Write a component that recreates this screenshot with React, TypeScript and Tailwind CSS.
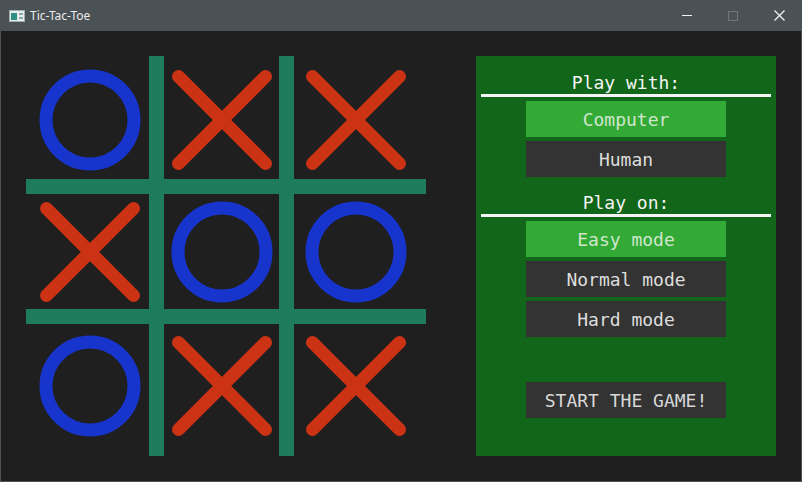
import React from "react";

type Mark = "X" | "O";

const board: Mark[][] = [
  ["O", "X", "X"],
  ["X", "O", "O"],
  ["O", "X", "X"],
];

const colPad = ["pl-[5px]", "", "pr-[8px]"];
const rowPad = ["pt-[5px]", "", "pb-[8px]"];
const colStart = ["col-start-1", "col-start-3", "col-start-5"];
const rowStart = ["row-start-1", "row-start-3", "row-start-5"];

function MarkIcon({ mark }: { mark: Mark }) {
  if (mark === "O") {
    return (
      <svg width="102" height="102" viewBox="0 0 102 102">
        <circle cx="51" cy="51" r="44" fill="none" stroke="#1734cc" strokeWidth="13" />
      </svg>
    );
  }
  return (
    <svg width="100" height="100" viewBox="0 0 100 100">
      <g stroke="#cc3315" strokeWidth="13" strokeLinecap="round">
        <line x1="6.5" y1="6.5" x2="93.5" y2="93.5" />
        <line x1="93.5" y1="6.5" x2="6.5" y2="93.5" />
      </g>
    </svg>
  );
}

function Board() {
  return (
    <div className="grid grid-cols-[123px_15px_115px_15px_132px] grid-rows-[123px_15px_115px_15px_132px] w-[400px] h-[400px] shrink-0">
      {/* grid lines */}
      <div className="col-start-2 row-start-1 row-span-5 bg-[#1e7b5b]" />
      <div className="col-start-4 row-start-1 row-span-5 bg-[#1e7b5b]" />
      <div className="row-start-2 col-start-1 col-span-5 bg-[#1e7b5b]" />
      <div className="row-start-4 col-start-1 col-span-5 bg-[#1e7b5b]" />

      {board.map((row, r) =>
        row.map((m, c) => (
          <div
            key={`${r}-${c}`}
            className={`flex items-center justify-center ${colStart[c]} ${rowStart[r]} ${colPad[c]} ${rowPad[r]}`}
          >
            <MarkIcon mark={m} />
          </div>
        ))
      )}
    </div>
  );
}

function OptionButton({ label, active = false }: { label: string; active?: boolean }) {
  return (
    <div
      className={`w-[200px] h-[36px] flex items-center justify-center ${
        active ? "bg-[#33aa35] text-[#cfe6cc]" : "bg-[#333333] text-[#dedede]"
      }`}
    >
      {label}
    </div>
  );
}

function SectionTitle({ label }: { label: string }) {
  return (
    <div className="self-stretch flex flex-col items-center">
      <div className="h-[23px] leading-[23px] text-[#f4f4f4]">{label}</div>
      <div className="w-[290px] h-[3px] bg-[#f4f4f4]" />
    </div>
  );
}

function SettingsPanel() {
  return (
    <div className="w-[300px] h-[400px] bg-[#11661a] flex flex-col items-center pt-[15px] text-[18px] font-['DejaVu_Sans_Mono',monospace]">
      <SectionTitle label="Play with:" />
      <div className="flex flex-col gap-[4px] mt-[4px]">
        <OptionButton label="Computer" active />
        <OptionButton label="Human" />
      </div>

      <div className="mt-[14px] self-stretch">
        <SectionTitle label="Play on:" />
      </div>
      <div className="flex flex-col gap-[4px] mt-[4px]">
        <OptionButton label="Easy mode" active />
        <OptionButton label="Normal mode" />
        <OptionButton label="Hard mode" />
      </div>

      <div className="mt-[45px]">
        <div className="w-[200px] h-[36px] flex items-center justify-center bg-[#333333] text-[#d8d8d8]">
          START THE GAME!
        </div>
      </div>
    </div>
  );
}

function TitleBar() {
  return (
    <div className="h-[31px] bg-[#4a5255] flex items-center text-[#ececec] font-['Noto_Sans','Liberation_Sans',sans-serif] text-[12px]">
      <svg width="16" height="12" viewBox="0 0 16 12" className="ml-[9px]">
        <rect x="0.5" y="0.5" width="15" height="11" fill="#e8ecec" stroke="#9fb0b0" />
        <rect x="2" y="3" width="6" height="7" fill="#2f8f86" />
        <rect x="10" y="3" width="4" height="2" fill="#8aa7a4" />
        <rect x="10" y="7" width="4" height="2" fill="#8aa7a4" />
      </svg>
      <span className="ml-[5px]">Tic-Tac-Toe</span>
      <div className="ml-auto flex items-center h-full">
        <div className="w-[46px] h-full flex items-center justify-center">
          <div className="w-[10px] h-px bg-[#f0f0f0]" />
        </div>
        <div className="w-[46px] h-full flex items-center justify-center">
          <div className="w-[10px] h-[10px] border border-[#6f7779]" />
        </div>
        <div className="w-[46px] h-full flex items-center justify-center">
          <svg width="11" height="11" viewBox="0 0 11 11">
            <g stroke="#f4f4f4" strokeWidth="1.2">
              <line x1="0.5" y1="0.5" x2="10.5" y2="10.5" />
              <line x1="10.5" y1="0.5" x2="0.5" y2="10.5" />
            </g>
          </svg>
        </div>
      </div>
    </div>
  );
}

export default function App() {
  return (
    <div className="w-[802px] h-[482px] flex flex-col overflow-hidden">
      <TitleBar />
      <div className="flex-1 bg-[#1f1f1f] border-x border-b border-[#4a5255] p-[25px] flex gap-[50px]">
        <Board />
        <SettingsPanel />
      </div>
    </div>
  );
}
